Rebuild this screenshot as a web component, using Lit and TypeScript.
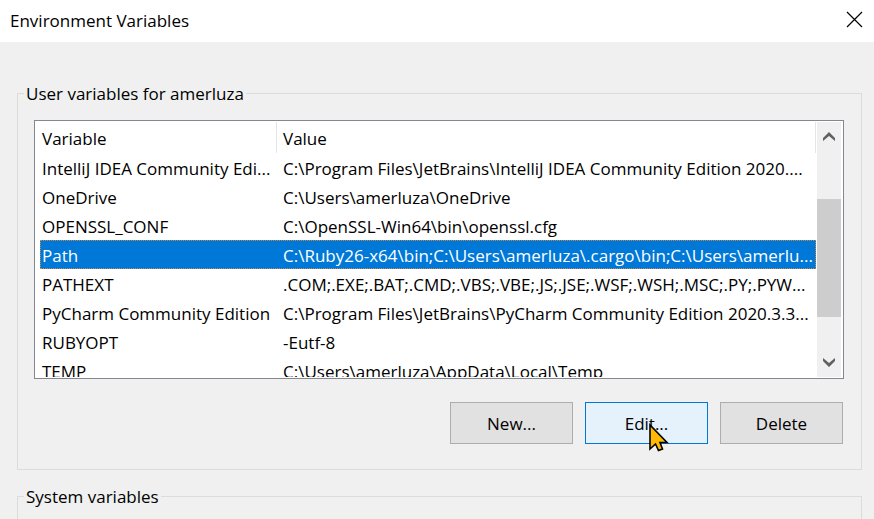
import { LitElement, html, css } from "lit";
import { customElement, state } from "lit/decorators.js";
import { classMap } from "lit/directives/class-map.js";

interface Variable {
  name: string;
  value: string;
}

const USER_VARIABLES: Variable[] = [
  { name: "IntelliJ IDEA Community Edi...", value: "C:\\Program Files\\JetBrains\\IntelliJ IDEA Community Edition 2020...." },
  { name: "OneDrive", value: "C:\\Users\\amerluza\\OneDrive" },
  { name: "OPENSSL_CONF", value: "C:\\OpenSSL-Win64\\bin\\openssl.cfg" },
  { name: "Path", value: "C:\\Ruby26-x64\\bin;C:\\Users\\amerluza\\.cargo\\bin;C:\\Users\\amerlu..." },
  { name: "PATHEXT", value: ".COM;.EXE;.BAT;.CMD;.VBS;.VBE;.JS;.JSE;.WSF;.WSH;.MSC;.PY;.PYW..." },
  { name: "PyCharm Community Edition", value: "C:\\Program Files\\JetBrains\\PyCharm Community Edition 2020.3.3..." },
  { name: "RUBYOPT", value: "-Eutf-8" },
  { name: "TEMP", value: "C:\\Users\\amerluza\\AppData\\Local\\Temp" },
];

@customElement("variable-list")
class VariableList extends LitElement {
  @state() selected = "Path";

  static styles = css`
    :host {
      display: flex;
      box-sizing: border-box;
      height: 259px;
      border: 1px solid #828790;
      padding: 1px 2px 1px 5px;
      background: #fff;
    }
    .view {
      flex: 1;
      min-width: 0;
      overflow: hidden;
    }
    .table {
      width: 100%;
      table-layout: fixed;
      border-collapse: separate;
      border-spacing: 0;
    }
    .name {
      width: 237px;
    }
    th,
    td {
      box-sizing: border-box;
      height: 29px;
      padding: 2px 0 0 2px;
      font-weight: 400;
      line-height: 27px;
      text-align: left;
      white-space: nowrap;
      overflow: hidden;
    }
    th {
      height: 31px;
      line-height: 29px;
      border-right: 1px solid #e5e5e5;
    }
    th + th,
    td + td {
      padding-left: 6px;
    }
    .selected {
      background: #0078d7;
      color: #fff;
      outline: 1px dotted #c8854c;
      outline-offset: -1px;
    }
    .bar {
      display: flex;
      flex-direction: column;
      width: 24px;
      margin-left: 1px;
      background: #f0f0f0;
    }
    .arrow {
      display: grid;
      place-items: center;
      flex: none;
      height: 30px;
      padding: 0;
      border: 0;
      background: none;
    }
    .track {
      display: flex;
      flex-direction: column;
      flex: 1;
    }
    .before {
      flex: 47;
    }
    .thumb {
      flex: 118;
      background: #cdcdcd;
    }
    .after {
      flex: 30;
    }
  `;

  render() {
    return html`
      <div class="view">
        <table class="table">
          <thead>
            <tr>
              <th class="name" scope="col">Variable</th>
              <th scope="col">Value</th>
            </tr>
          </thead>
          <tbody>
            ${USER_VARIABLES.map(
              (v) => html`<tr
                class=${classMap({ selected: v.name === this.selected })}
                @click=${() => (this.selected = v.name)}
              >
                <td>${v.name}</td>
                <td>${v.value}</td>
              </tr>`
            )}
          </tbody>
        </table>
      </div>
      <div class="bar">
        <button class="arrow" aria-label="Scroll up">
          <svg width="12" height="10" viewBox="0 0 12 10">
            <path d="M0 6L6 0L12 6V9L6 4L0 9Z" fill="#606060" />
          </svg>
        </button>
        <div class="track">
          <div class="before"></div>
          <div class="thumb"></div>
          <div class="after"></div>
        </div>
        <button class="arrow" aria-label="Scroll down">
          <svg width="12" height="10" viewBox="0 0 12 10">
            <path d="M0 4L6 10L12 4V1L6 6L0 1Z" fill="#606060" />
          </svg>
        </button>
      </div>
    `;
  }
}

@customElement("app-root")
class AppRoot extends LitElement {
  static styles = css`
    :host {
      display: flex;
      flex-direction: column;
      height: 100vh;
      overflow: hidden;
      background: #f0f0f0;
      color: #000;
      font: 17px/30px "Open Sans", "Noto Sans", sans-serif;
    }
    .title {
      display: flex;
      align-items: center;
      justify-content: space-between;
      flex: none;
      height: 42px;
      padding: 0 11px 0 10px;
      background: #fff;
    }
    h1 {
      margin: 0;
      font-size: inherit;
      font-weight: 400;
    }
    .close {
      display: flex;
      padding: 0;
      border: 0;
      margin-bottom: 4px;
      background: none;
    }
    .body {
      display: flex;
      flex-direction: column;
      gap: 11px;
      padding: 36px 12px 0 17px;
    }
    fieldset {
      min-width: 0;
      margin: 0;
      padding: 12px 17px 25px 16px;
      border: 1px solid #dcdcdc;
    }
    legend {
      margin-left: -10px;
      padding: 2px 2px 0;
      line-height: 28px;
    }
    .actions {
      display: flex;
      justify-content: flex-end;
      gap: 12px;
      margin: 23px 1px 0 0;
    }
    .slot {
      position: relative;
      display: flex;
    }
    .action {
      box-sizing: border-box;
      width: 123px;
      height: 42px;
      padding: 2px 0 0;
      border: 1px solid #adadad;
      background: #e1e1e1;
      color: inherit;
      font: inherit;
    }
    .hot {
      border-color: #0078d7;
      background: #e5f1fb;
    }
    .pointer {
      position: absolute;
      left: 64px;
      top: 21px;
      pointer-events: none;
    }
  `;

  render() {
    return html`
      <header class="title">
        <h1>Environment Variables</h1>
        <button class="close" aria-label="Close">
          <svg width="17" height="17" viewBox="0 0 17 17">
            <path d="M1 1L16 16M16 1L1 16" fill="none" stroke="#000" stroke-width="1.2" />
          </svg>
        </button>
      </header>
      <main class="body">
        <fieldset>
          <legend>User variables for amerluza</legend>
          <variable-list></variable-list>
          <div class="actions">
            <button class="action">New...</button>
            <div class="slot">
              <button class="action hot">Edit...</button>
              <svg class="pointer" width="20" height="30" viewBox="0 0 20 30">
                <path
                  d="M1 2V26L6.5 21L9.5 27.5L13.5 26L11 19.5H18Z"
                  fill="#ffb900"
                  stroke="#000"
                  stroke-width="1.6"
                />
              </svg>
            </div>
            <button class="action">Delete</button>
          </div>
        </fieldset>
        <fieldset>
          <legend>System variables</legend>
        </fieldset>
      </main>
    `;
  }
}
